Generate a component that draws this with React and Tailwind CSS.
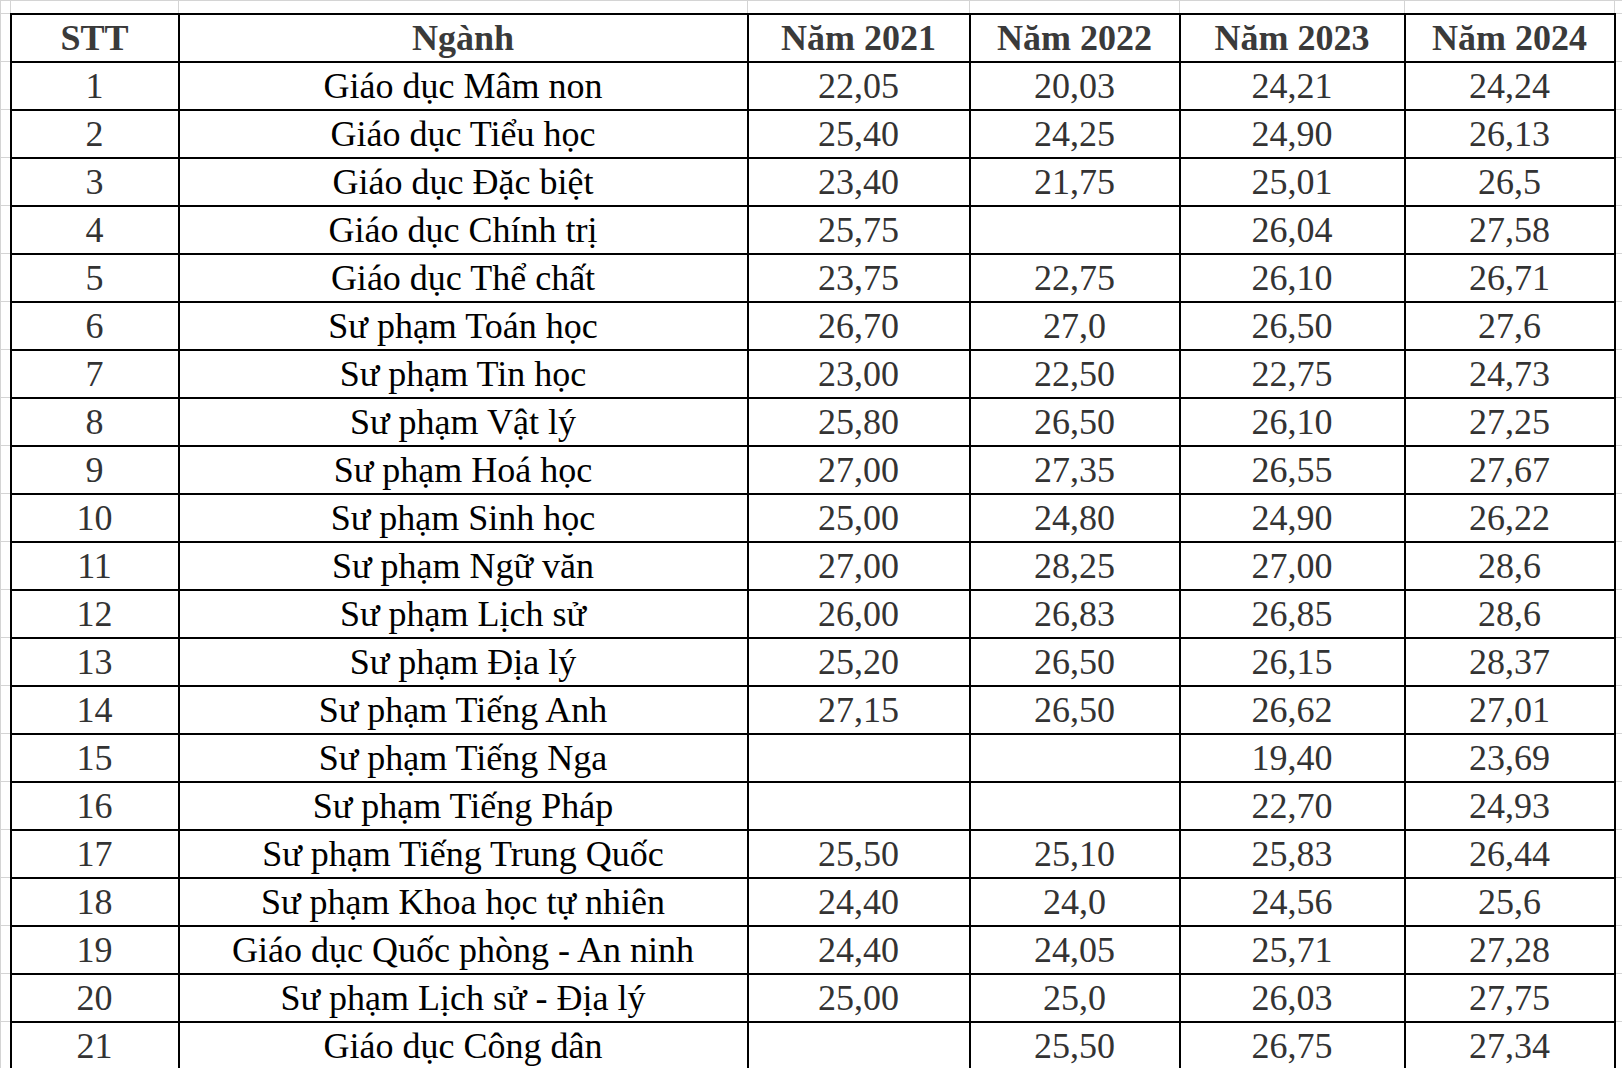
import React from "react";

const rows = [
  ["1", "Giáo dục Mâm non", "22,05", "20,03", "24,21", "24,24"],
  ["2", "Giáo dục Tiểu học", "25,40", "24,25", "24,90", "26,13"],
  ["3", "Giáo dục Đặc biệt", "23,40", "21,75", "25,01", "26,5"],
  ["4", "Giáo dục Chính trị", "25,75", "", "26,04", "27,58"],
  ["5", "Giáo dục Thê\u0309 châ\u0301t", "23,75", "22,75", "26,10", "26,71"],
  ["6", "Sư phạm Toán học", "26,70", "27,0", "26,50", "27,6"],
  ["7", "Sư phạm Tin học", "23,00", "22,50", "22,75", "24,73"],
  ["8", "Sư phạm Vật lý", "25,80", "26,50", "26,10", "27,25"],
  ["9", "Sư phạm Hoá học", "27,00", "27,35", "26,55", "27,67"],
  ["10", "Sư phạm Sinh học", "25,00", "24,80", "24,90", "26,22"],
  ["11", "Sư phạm Ngữ văn", "27,00", "28,25", "27,00", "28,6"],
  ["12", "Sư phạm Lịch sử", "26,00", "26,83", "26,85", "28,6"],
  ["13", "Sư phạm Địa lý", "25,20", "26,50", "26,15", "28,37"],
  ["14", "Sư phạm Tiếng Anh", "27,15", "26,50", "26,62", "27,01"],
  ["15", "Sư phạm Tiếng Nga", "", "", "19,40", "23,69"],
  ["16", "Sư phạm Tiếng Pháp", "", "", "22,70", "24,93"],
  ["17", "Sư phạm Tiếng Trung Quốc", "25,50", "25,10", "25,83", "26,44"],
  ["18", "Sư phạm Khoa học tự nhiên", "24,40", "24,0", "24,56", "25,6"],
  ["19", "Gia\u0301o du\u0323c Quô\u0301c pho\u0300ng - An ninh", "24,40", "24,05", "25,71", "27,28"],
  ["20", "Sư phạm Lịch sử - Địa lý", "25,00", "25,0", "26,03", "27,75"],
  ["21", "Giáo dục Công dân", "", "25,50", "26,75", "27,34"],
];

const headers = ["STT", "Ngành", "Năm 2021", "Năm 2022", "Năm 2023", "Năm 2024"];

const grid = "border border-[#d4d4d4] p-0";
const cell = "border-2 border-black p-0 text-center align-middle whitespace-nowrap";

export default function App() {
  return (
    <div className="w-[1622px] h-[1068px] overflow-hidden bg-white font-['Liberation_Serif','Times_New_Roman',serif]">
      <table className="border-collapse table-fixed w-[1640px]">
        <colgroup>
          <col className="w-[10px]" />
          <col className="w-[168px]" />
          <col className="w-[569px]" />
          <col className="w-[222px]" />
          <col className="w-[210px]" />
          <col className="w-[225px]" />
          <col className="w-[210px]" />
          <col />
        </colgroup>
        <tbody>
          <tr className="h-[13px]">
            <td className={grid}></td>
            {headers.map((h) => (
              <td key={h} className={grid}></td>
            ))}
            <td className={grid}></td>
          </tr>
          <tr className="h-[48px]">
            <td className={grid}></td>
            {headers.map((h) => (
              <td key={h} className={cell + " text-[36px] font-bold text-[#3a3a3a] leading-none"}>
                {h}
              </td>
            ))}
            <td className={grid}></td>
          </tr>
          {rows.map((r) => (
            <tr key={r[0]} className="h-[48px]">
              <td className={grid}></td>
              {r.map((v, i) => (
                <td
                  key={i}
                  className={
                    cell +
                    " text-[36px] leading-none " +
                    (i === 1 ? "text-black" : "text-[#333333]")
                  }
                >
                  {v}
                </td>
              ))}
              <td className={grid}></td>
            </tr>
          ))}
        </tbody>
      </table>
    </div>
  );
}
